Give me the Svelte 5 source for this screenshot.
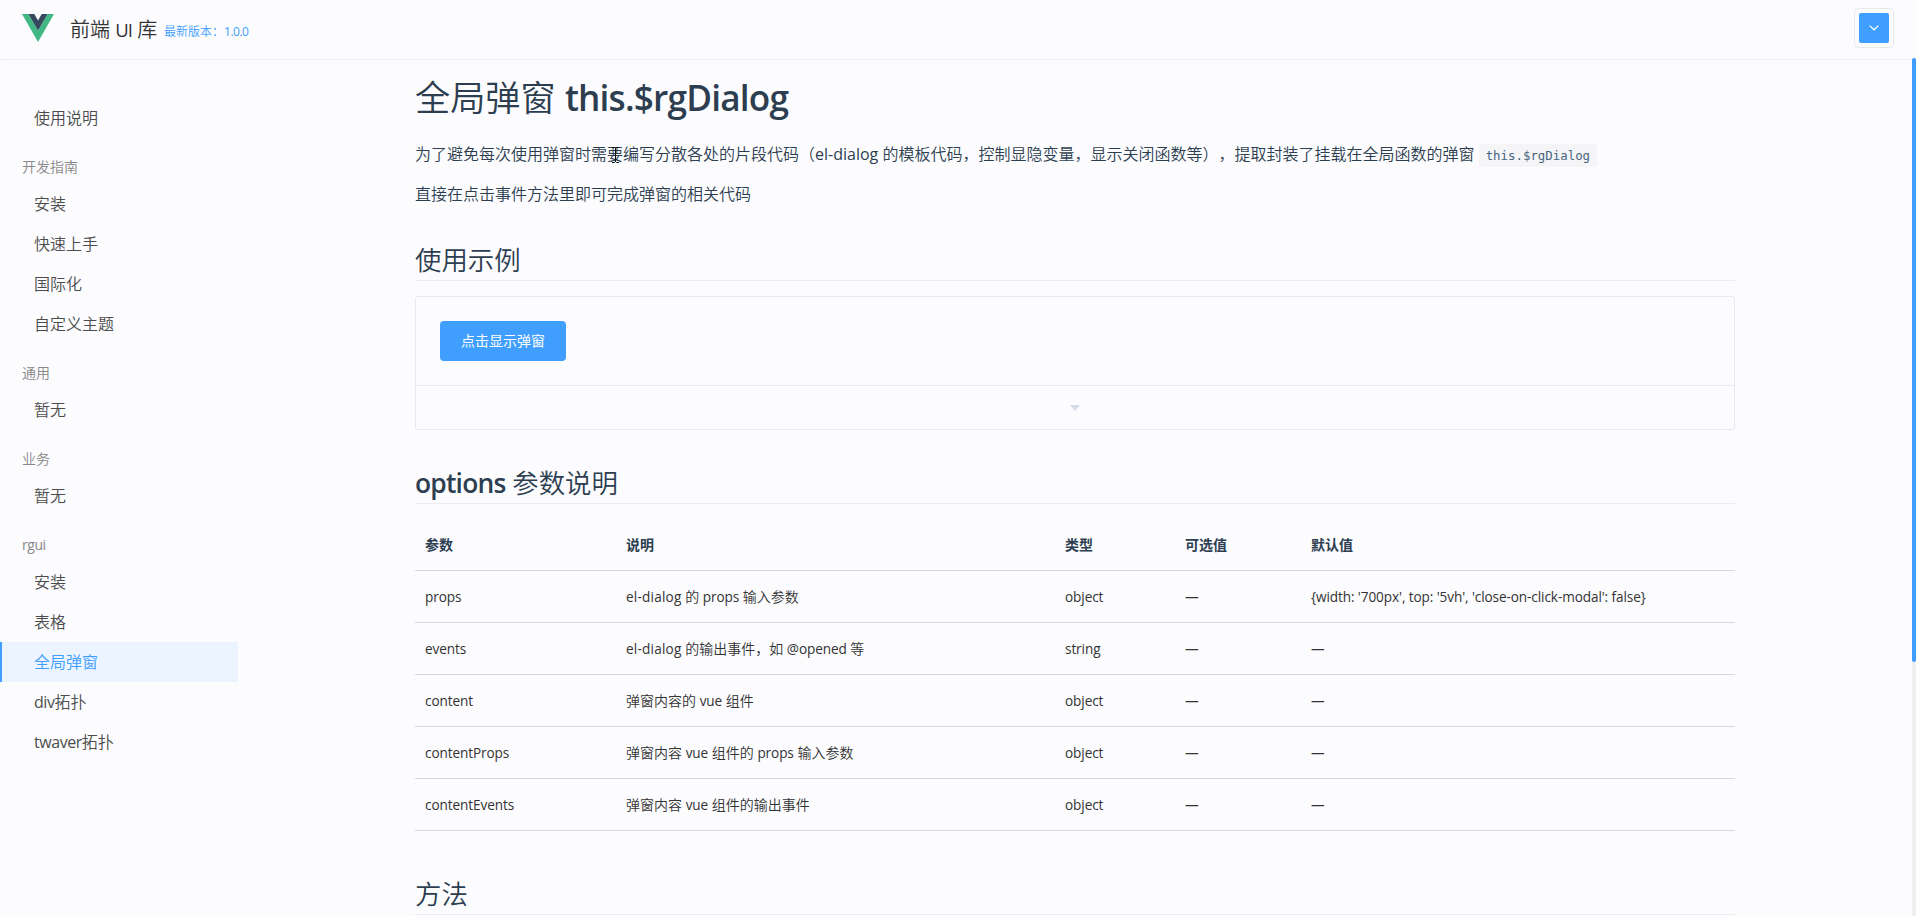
<script>
  const groups = [
    { title: '', items: ['使用说明'] },
    { title: '开发指南', items: ['安装', '快速上手', '国际化', '自定义主题'] },
    { title: '通用', items: ['暂无'] },
    { title: '业务', items: ['暂无'] },
    { title: 'rgui', items: ['安装', '表格', '全局弹窗', 'div拓扑', 'twaver拓扑'] }
  ];
  const active = '全局弹窗';
  const columns = ['参数', '说明', '类型', '可选值', '默认值'];
  const rows = [
    ['props', 'el-dialog 的 props 输入参数', 'object', '—', "{width: '700px', top: '5vh', 'close-on-click-modal': false}"],
    ['events', 'el-dialog 的输出事件，如 @opened 等', 'string', '—', '—'],
    ['content', '弹窗内容的 vue 组件', 'object', '—', '—'],
    ['contentProps', '弹窗内容 vue 组件的 props 输入参数', 'object', '—', '—'],
    ['contentEvents', '弹窗内容 vue 组件的输出事件', 'object', '—', '—']
  ];

  // Latin runs have their own weight and tracking beside the Chinese text.
  const split = (text) => text.split(/([!-~—]+(?: [!-~]+)*)/).filter(Boolean);
  const isLatin = (part) => /^[!-~—]/.test(part);
</script>

{#snippet mixed(text)}{#each split(text) as part}{#if isLatin(part)}<span class="lat" class:wide={part === 'el-dialog'}>{part}</span>{:else}{part}{/if}{/each}{/snippet}

<div class="page">
  <header>
    <svg class="logo" width="32" height="28" viewBox="0 0 32 28">
      <path d="M0 0h6.4L16 16.6 25.6 0H32L16 28z" fill="#41b883" />
      <path d="M6.4 0h5.9L16 6.4 19.7 0h5.9L16 16.6z" fill="#35495e" />
    </svg>
    <span class="brand">{@render mixed('前端 UI 库')}</span>
    <span class="version">{@render mixed('最新版本：1.0.0')}</span>
    <div class="toggle">
      <button aria-label="menu">
        <svg width="10" height="6" viewBox="0 0 10 6"><path d="M.6.6 5 4.8 9.4.6" fill="none" stroke="#fff" stroke-width="1.2" /></svg>
      </button>
    </div>
  </header>

  <div class="body">
    <nav>
      {#each groups as g}
        {#if g.title}<div class="group">{@render mixed(g.title)}</div>{/if}
        {#each g.items as item}
          <a class:active={item === active}>{@render mixed(item)}</a>
        {/each}
      {/each}
    </nav>

    <main>
      <h1>全局弹窗 <b>this.$rgDialog</b></h1>
      <p>为了避免每次使用弹窗时需<span class="caret-host">要<svg class="ibeam" width="7" height="16" viewBox="0 0 7 16"><path d="M0 .5h2.5l1 1 1-1H7M3.5 1v14M0 15.5h2.5l1-1 1 1H7" fill="none" stroke="#111" /></svg></span>编写分散各处的片段代码（<span class="lat">el-dialog</span> 的模板代码，控制显隐变量，显示关闭函数等），提取封装了挂载在全局函数的弹窗 <code>this.$rgDialog</code></p>
      <p>直接在点击事件方法里即可完成弹窗的相关代码</p>

      <h2 class="first">使用示例</h2>
      <section class="demo">
        <div class="source"><button class="primary">点击显示弹窗</button></div>
        <div class="control"><i></i></div>
      </section>

      <h2 class="second"><b>options</b> 参数说明</h2>
      <table>
        <colgroup><col class="c1" /><col class="c2" /><col class="c3" /><col class="c4" /><col /></colgroup>
        <thead><tr>{#each columns as c}<th>{c}</th>{/each}</tr></thead>
        <tbody>
          {#each rows as r}
            <tr>{#each r as cell}<td>{@render mixed(cell)}</td>{/each}</tr>
          {/each}
        </tbody>
      </table>

      <h2 class="third">方法</h2>
    </main>

    <div class="scroll"><div class="thumb"></div></div>
  </div>
</div>

<style>
  :global(body) { background: #fcfcff; overflow: hidden; }
  .page {
    height: 916px;
    overflow: hidden;
    display: flex;
    flex-direction: column;
    color: #2c3e50;
    font-family: "Open Sans", "Noto Sans CJK SC", sans-serif;
    font-size: 16px;
    font-weight: 350;
    text-spacing-trim: space-all;
  }
  .lat { font-weight: 400; }
  header {
    height: 60px;
    box-sizing: border-box;
    flex: none;
    border-bottom: 1px dotted #e2e2f6;
    display: flex;
    padding: 0 22px;
  }
  .logo { margin-top: 14px; }
  .brand { margin-left: 16px; line-height: 59px; font-size: 20px; color: #333; width: 94px; white-space: nowrap; }
  .brand .lat { font-size: 18.5px; letter-spacing: -0.9px; }
  .version { font-size: 12px; line-height: 64px; color: #409eff; }
  .version .lat { letter-spacing: -0.5px; }
  .toggle {
    margin: 8px 0 0 auto;
    width: 40px;
    height: 40px;
    box-sizing: border-box;
    border: 1px solid #e8e8f0;
    border-radius: 4px;
    display: grid;
    place-items: center;
  }
  .toggle button {
    width: 30px;
    height: 30px;
    padding: 0;
    border: 0;
    border-radius: 2px;
    background: #409eff;
    display: grid;
    place-items: center;
  }
  .body { flex: 1; display: flex; min-height: 0; }
  nav { width: 238px; padding-top: 38px; flex: none; }
  nav a {
    display: block;
    box-sizing: border-box;
    height: 40px;
    line-height: 40px;
    padding-left: 32px;
    border-left: 2px solid transparent;
    color: #4c4c4c;
  }
  nav a.active { color: #409eff; border-color: #409eff; background: #ecf5ff; }
  nav .lat { letter-spacing: -0.45px; }
  .group { font-size: 14px; line-height: 18px; padding: 20px 0 8px 22px; color: #888; }
  main { width: 1320px; margin-left: 177px; flex: none; }
  h1, h2, p { margin: 0; font-weight: 350; white-space: nowrap; }
  h1 { font-size: 35.2px; line-height: 44px; padding-top: 15px; }
  h1 b, h2 b { font-weight: 600; letter-spacing: -0.8px; }
  p { height: 24px; line-height: 24px; margin-top: 16px; }
  h1 + p { margin-top: 23px; }
  .caret-host { position: relative; }
  .ibeam { position: absolute; left: 5px; top: 4px; }
  code {
    font-family: "DejaVu Sans Mono", monospace;
    font-size: 12.4px;
    line-height: 1;
    background: #f5f5f8;
    color: #476582;
    padding: 4px 7px;
    border-radius: 3px;
  }
  h2 { font-size: 26.4px; line-height: 33px; padding-bottom: 3px; border-bottom: 1px solid #ececf4; }
  .first { margin-top: 38px; }
  .second { margin-top: 37px; }
  .third { margin-top: 47px; }
  .demo { margin-top: 15px; border: 1px solid #e8e8f3; border-radius: 3px; }
  .source { padding: 24px; height: 40px; }
  .primary {
    width: 126px;
    height: 40px;
    padding: 0 0 2px;
    border: 0;
    border-radius: 4px;
    background: #409eff;
    color: #fff;
    font: 14px "Noto Sans CJK SC", sans-serif;
  }
  .control { border-top: 1px solid #e8e8f3; height: 43px; display: grid; place-items: center; }
  .control i { border: 5px solid transparent; border-top: 6px solid #d3dce6; border-bottom: 0; }
  table { width: 1320px; margin-top: 15px; table-layout: fixed; border-collapse: collapse; font-size: 14px; }
  .c1 { width: 201px; }
  .c2 { width: 439px; }
  .c3 { width: 120px; }
  .c4 { width: 126px; }
  th, td { height: 51px; padding: 0 10px; border-bottom: 1px solid #d8d8dc; text-align: left; line-height: 20px; white-space: nowrap; }
  th { font-weight: 600; }
  td { color: #333; }
  td .lat { font-size: 13.6px; letter-spacing: -0.1px; }
  td .wide { letter-spacing: 0.2px; }
  .scroll { margin: -2px 0 0 auto; width: 4px; background: #efeff2; }
  .thumb { height: 604px; background: #409eff; border-radius: 2px; }
</style>
